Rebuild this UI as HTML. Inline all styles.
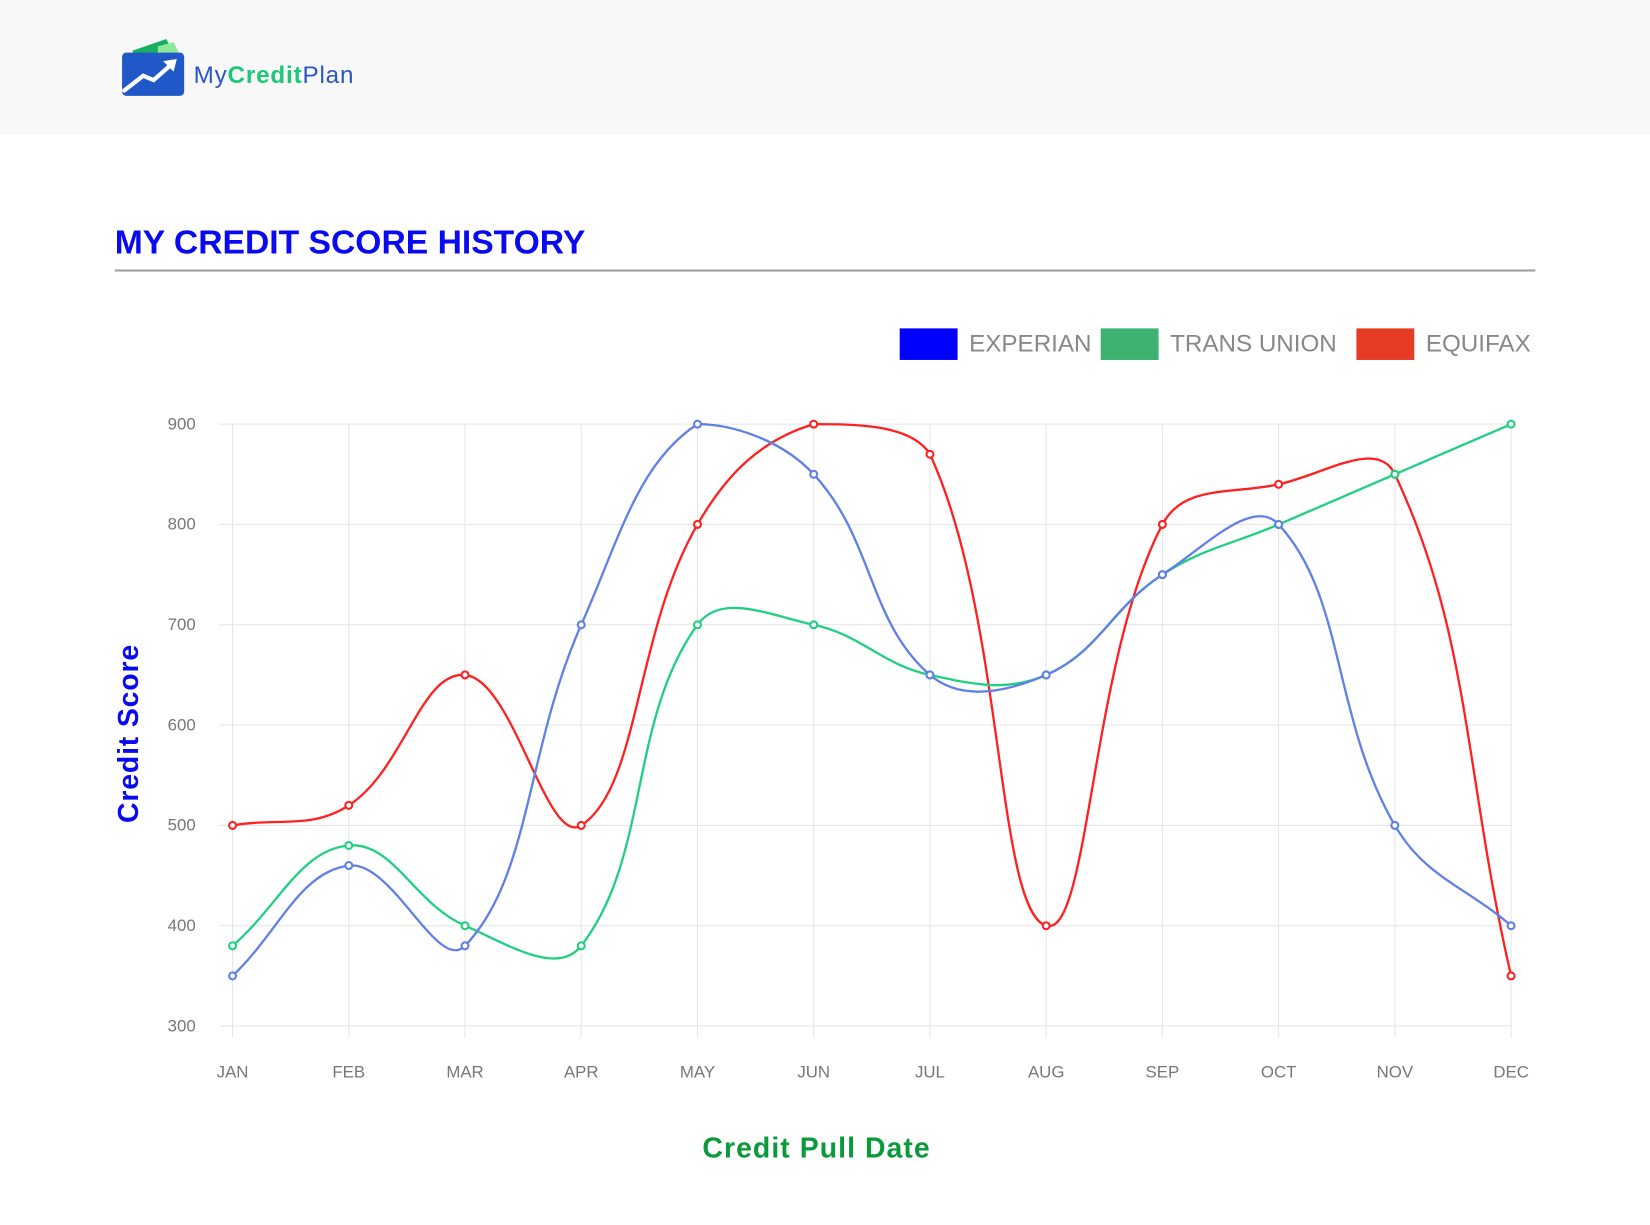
<!DOCTYPE html>
<html><head><meta charset="utf-8"><style>
html,body{margin:0;padding:0;background:#fff;}
svg{display:block;font-family:"Liberation Sans",sans-serif;}
</style></head><body>
<svg id="s" width="1650" height="1225" viewBox="0 0 1568 1164" xmlns="http://www.w3.org/2000/svg">
<rect x="0" y="0" width="1568" height="128" fill="#f8f8f8"/>
<path d="M126 48 L158 37 L166 52 L126 52 Z" fill="#18b060"/>
<path d="M150 44 L165 40 L172 54 L150 54 Z" fill="#8fe89a"/>
<rect x="116" y="50" width="59" height="41" rx="4" fill="#2158c8"/>
<path d="M118 86 L136 72 L146 76 L162 62" fill="none" stroke="#fff" stroke-width="4" stroke-linecap="round"/>
<path d="M155 58 L168 56 L165 68 Z" fill="#fff"/>
<text x="184" y="79" font-size="23" letter-spacing="0.8"><tspan fill="#2a55c8">My</tspan><tspan fill="#1ec87a" font-weight="bold">Credit</tspan><tspan fill="#2a55c8">Plan</tspan></text>
<text x="109" y="241" font-size="32" font-weight="bold" fill="#0a0af0">MY CREDIT SCORE HISTORY</text>
<rect x="109" y="256" width="1350" height="2" fill="#a0a0a0"/>
<rect x="855" y="312" width="55" height="30" fill="#0000ff"/>
<text x="921" y="334" font-size="23" fill="#888">EXPERIAN</text>
<rect x="1046" y="312" width="55" height="30" fill="#3cb371"/>
<text x="1112" y="334" font-size="23" fill="#888">TRANS UNION</text>
<rect x="1289" y="312" width="55" height="30" fill="#e63b25"/>
<text x="1355" y="334" font-size="23" fill="#888">EQUIFAX</text>
<g id="grid"></g>
<g id="lines"></g>
<text transform="translate(131,697) rotate(-90)" text-anchor="middle" font-size="27" font-weight="bold" letter-spacing="0.8" fill="#0a0af0">Credit Score</text>
<text x="776" y="1100" text-anchor="middle" font-size="27" font-weight="bold" letter-spacing="1" fill="#0a9a3a">Credit Pull Date</text>
</svg>
<script>
var NS="http://www.w3.org/2000/svg";
function el(t,a,p){var e=document.createElementNS(NS,t);for(var k in a)e.setAttribute(k,a[k]);p.appendChild(e);return e;}
var g=document.getElementById('grid'),L=document.getElementById('lines');
var X=function(i){return 221+i*(1436-221)/11;};
var Y=function(v){return 403+(900-v)*(975-403)/600;};
var months=["JAN","FEB","MAR","APR","MAY","JUN","JUL","AUG","SEP","OCT","NOV","DEC"];
for(var v=300;v<=900;v+=100){el('line',{x1:208,x2:1437,y1:Y(v),y2:Y(v),stroke:'#e6e6e6','stroke-width':1},g);
var t=el('text',{x:186,y:Y(v)+5,'text-anchor':'end','font-size':16,fill:'#777'},g);t.textContent=v;}
for(var i=0;i<12;i++){el('line',{x1:X(i),x2:X(i),y1:403,y2:986,stroke:'#e6e6e6','stroke-width':1},g);
var t=el('text',{x:X(i),y:1024,'text-anchor':'middle','font-size':16,fill:'#777'},g);t.textContent=months[i];}
var sets=[
[[500,520,650,500,800,900,870,400,800,840,850,350],'#ff2020'],
[[380,480,400,380,700,700,650,650,750,800,850,900],'#20d080'],
[[350,460,380,700,900,850,650,650,750,800,500,400],'#6080e8']];
function cl(q){return [Math.max(221,Math.min(1436,q[0])),Math.max(403,Math.min(975,q[1]))];}
sets.forEach(function(s){
var p=s[0].map(function(v,i){return [X(i),Y(v)];});var n=p.length,T=0.4,cps=[];
for(var i=0;i<n;i++){var pr=p[Math.max(i-1,0)],c=p[i],nx=p[Math.min(i+1,n-1)];
var d01=Math.hypot(c[0]-pr[0],c[1]-pr[1]),d12=Math.hypot(nx[0]-c[0],nx[1]-c[1]);
var s01=d01/(d01+d12)||0,s12=d12/(d01+d12)||0;var fa=T*s01,fb=T*s12;
cps.push([cl([c[0]-fa*(nx[0]-pr[0]),c[1]-fa*(nx[1]-pr[1])]),cl([c[0]+fb*(nx[0]-pr[0]),c[1]+fb*(nx[1]-pr[1])])]);}
var d='M'+p[0][0]+' '+p[0][1];
for(var i=1;i<n;i++){var a=cps[i-1][1],b=cps[i][0];d+=' C'+a[0]+' '+a[1]+' '+b[0]+' '+b[1]+' '+p[i][0]+' '+p[i][1];}
el('path',{d:d,fill:'none',stroke:s[1],'stroke-width':2.2},L);
p.forEach(function(q){el('circle',{cx:q[0],cy:q[1],r:3.3,fill:'#fff',stroke:s[1],'stroke-width':2},L);});
});
</script>
</body></html>
